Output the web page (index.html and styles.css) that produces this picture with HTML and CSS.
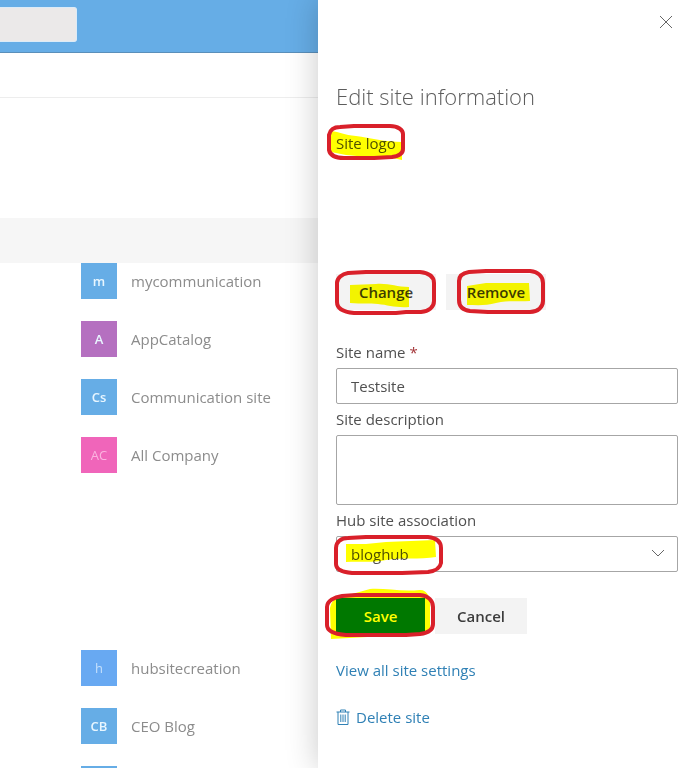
FILE: index.html
```html
<!DOCTYPE html>
<html lang="en">
<head>
<meta charset="utf-8">
<meta name="viewport" content="width=device-width, initial-scale=1">
<title>Edit site information</title>
<link rel="stylesheet" href="styles.css">
</head>
<body>
<div class="page">
  <div class="background">
    <header class="suite-bar"><input class="search" type="text" aria-label="Search"></header>
    <div class="nav-strip"></div>
    <div class="hero"></div>
    <div class="column-band"></div>
    <ul class="sites">
      <li class="site"><span class="avatar blue">m</span><span>mycommunication</span></li>
      <li class="site"><span class="avatar purple">A</span><span>AppCatalog</span></li>
      <li class="site"><span class="avatar blue">Cs</span><span>Communication site</span></li>
      <li class="site"><span class="avatar pink">AC</span><span>All Company</span></li>
    </ul>
    <ul class="sites sites-later">
      <li class="site"><span class="avatar bright">h</span><span>hubsitecreation</span></li>
      <li class="site"><span class="avatar blue">CB</span><span>CEO Blog</span></li>
      <li class="site"><span class="avatar blue"></span><span></span></li>
    </ul>
  </div>

  <aside class="panel">
    <div class="panel-top">
      <button class="close" type="button" aria-label="Close">
        <svg width="14" height="14" viewBox="0 0 14 14"><path d="M1 1L13 13M13 1L1 13"/></svg>
      </button>
    </div>
    <h1 class="title">Edit site information</h1>
    <form class="form">
      <div class="logo-label">
        <span class="marked">Site logo
          <svg class="marker" width="80" height="30"><path d="M-5 0C4 1 8 4 20 5C34 7 50 11 66 11L66 29L52 26C38 24 25 26 10 24L-5 21Z"/></svg>
          <svg class="ring" width="80" height="30"><path d="M4-4L18-5H54C62-5 67-1 67 3V18C67 23 63 25 56 26L38 27H8C-1 27-6 24-7 19V4C-6-1-2-4 4-4Z"/></svg>
        </span>
      </div>
      <div class="logo-actions">
        <span class="marked">
          <button class="btn wide" type="button">Change</button>
          <svg class="marker" width="100" height="36"><path d="M14 11L40 10C53 9 60 13 73 13L73 33C60 34 52 31 42 30C33 29 26 30 14 29Z"/></svg>
          <svg class="ring" width="100" height="36"><path d="M12-1L30-2H84C93-1 98 3 98 9V27C98 33 93 37 85 38H70L60 39H18C7 38 1 34 1 28V9C1 4 6 0 12-1Z"/></svg>
        </span>
        <span class="marked">
          <button class="btn wide" type="button">Remove</button>
          <svg class="marker" width="100" height="36"><path d="M21 12L40 9H83L84 27C70 28 64 26 50 29C40 32 30 31 21 31Z"/></svg>
          <svg class="ring" width="100" height="36"><path d="M23-2L40-3H84C93-2 97 3 97 9V27C97 33 92 38 84 38H42L24 37C16 36 13 32 13 26V7C13 2 17-1 23-2Z"/></svg>
        </span>
      </div>

      <label class="label" for="site-name">Site name <span class="required">*</span></label>
      <input class="field" id="site-name" type="text" value="Testsite" required>

      <label class="label" for="site-description">Site description</label>
      <textarea class="field area" id="site-description"></textarea>

      <label class="label" for="hub">Hub site association</label>
      <div class="select-wrap">
        <select class="field" id="hub"><option>bloghub</option></select>
        <svg class="chevron" width="14" height="8" viewBox="0 0 14 8"><path d="M1 1L7 7L13 1"/></svg>
        <svg class="marker" width="100" height="36"><path d="M10 8L30 8L50 6L99 4L100 21C84 24 64 21 50 24C36 27 24 25 10 26Z"/></svg>
        <svg class="ring" width="110" height="36"><path d="M12 2L30 1H92C101 2 105 6 105 12V27C104 33 99 35 92 36L66 37H16C5 36 0 33 0 28V12C0 6 5 2 12 2Z"/></svg>
      </div>

      <div class="form-actions">
        <span class="marked">
          <button class="btn primary" type="submit">Save</button>
          <svg class="marker" width="100" height="36"><path d="M-6 10C-4 0 4-4 16-4L34-9C50-10 64-6 84-8C92-8 95 0 94 12V30L88 36L50 38L-5 41Z"/></svg>
          <svg class="ring" width="100" height="36"><path d="M6-2L20-3H84C93-2 97 3 97 9V26C97 32 92 35 84 36L70 37H10C-3 36-9 33-9 27V9C-9 3-2-1 6-2Z"/></svg>
        </span>
        <button class="btn" type="button">Cancel</button>
      </div>
    </form>
    <a class="link" href="#settings">View all site settings</a>
    <a class="link delete" href="#delete">
      <svg class="trash" width="14" height="17" viewBox="0 0 14 17"><path d="M0.5 3H13.5M4.5 3V1H9.5V3M2 3V15.5H12V3M4.8 5.5V13M7 5.5V13M9.2 5.5V13"/></svg>
      <span>Delete site</span>
    </a>
  </aside>
</div>
</body>
</html>
```
FILE: styles.css
```css
* { box-sizing: border-box; }
body {
  margin: 0;
  background: #fff;
  color: #505050;
  font-family: "Open Sans", "Noto Sans", sans-serif;
  font-size: 15px;
  line-height: 24px;
}
button, input, select, textarea { font: inherit; color: inherit; }
.page {
  display: grid;
  grid-template-columns: minmax(0, 1fr) 378px;
  height: 100vh;
  min-height: 760px;
  overflow: hidden;
}
.background { min-width: 0; overflow: hidden; color: #8c8c8c; }
.suite-bar {
  height: 53px;
  padding-top: 7px;
  background: #66ade6;
  border-bottom: 1px solid #5a8fba;
}
.search {
  display: block;
  width: 77px;
  height: 35px;
  border: 1px solid #dcebf7;
  border-left: 0;
  border-radius: 0 3px 3px 0;
  background: #ebe9e9;
}
.nav-strip { height: 45px; border-bottom: 1px solid #ededed; }
.hero { height: 120px; }
.column-band { height: 45px; background: #f6f6f6; }
.sites {
  display: flex;
  flex-direction: column;
  gap: 22px;
  margin: 0;
  padding: 0 0 0 81px;
  list-style: none;
}
.sites-later { margin-top: 177px; }
.site { display: flex; align-items: center; gap: 14px; white-space: nowrap; }
.avatar {
  width: 36px;
  height: 36px;
  color: #e8f6ff;
  font-size: 13px;
  font-weight: 600;
  line-height: 36px;
  text-align: center;
}
.blue { background: #66ade6; }
.purple { background: #b570c0; }
.pink { background: #f065ba; color: #fbb4e0; font-weight: 400; }
.bright { background: #68a9f2; color: #c4e0fc; font-weight: 400; }
.panel {
  position: relative;
  padding: 0 18px;
  background: #fff;
  box-shadow: 0 0 30px rgba(0, 0, 0, 0.22);
}
.panel-top { display: flex; justify-content: flex-end; padding: 10px 0; }
.close {
  display: grid;
  place-items: center;
  width: 24px;
  height: 24px;
  padding: 0;
  border: 0;
  background: none;
}
.close path, .chevron path { fill: none; stroke: #666; stroke-width: 1; }
.title {
  margin: 37px 0 20px;
  color: #5c5c5c;
  font-size: 22px;
  font-weight: 300;
  line-height: 30px;
}
.marked { position: relative; display: inline-block; }
.marker, .ring {
  position: absolute;
  top: 0;
  left: 0;
  overflow: visible;
  pointer-events: none;
}
.marker { mix-blend-mode: multiply; fill: #ff0; }
.ring { fill: none; stroke: #d9202a; stroke-width: 4; }
.logo-label { height: 143px; }
.logo-actions, .form-actions { display: flex; gap: 10px; }
.logo-actions { margin-bottom: 27px; }
.form-actions { margin: 26px 0 24px; }
.btn {
  display: block;
  min-width: 92px;
  height: 36px;
  padding: 0;
  border: 0;
  background: #f3f3f3;
  color: #3c3c3c;
  font-weight: 600;
}
.wide { min-width: 100px; }
.primary { min-width: 89px; background: #007800; color: #fff; }
.label { display: block; line-height: 31px; }
.required { color: #a4373a; }
.field {
  display: block;
  width: 100%;
  height: 36px;
  padding: 0 14px;
  border: 1px solid #a6a6a6;
  border-radius: 2px;
  background: #fff;
  appearance: none;
}
.area { height: 70px; resize: none; }
.select-wrap { position: relative; }
.chevron { position: absolute; top: 13px; right: 13px; pointer-events: none; }
.link { display: block; color: #2f80b5; text-decoration: none; }
.delete { display: flex; align-items: center; gap: 6px; margin-top: 23px; }
.trash { fill: none; stroke: #2f80b5; stroke-width: 1; }
```
